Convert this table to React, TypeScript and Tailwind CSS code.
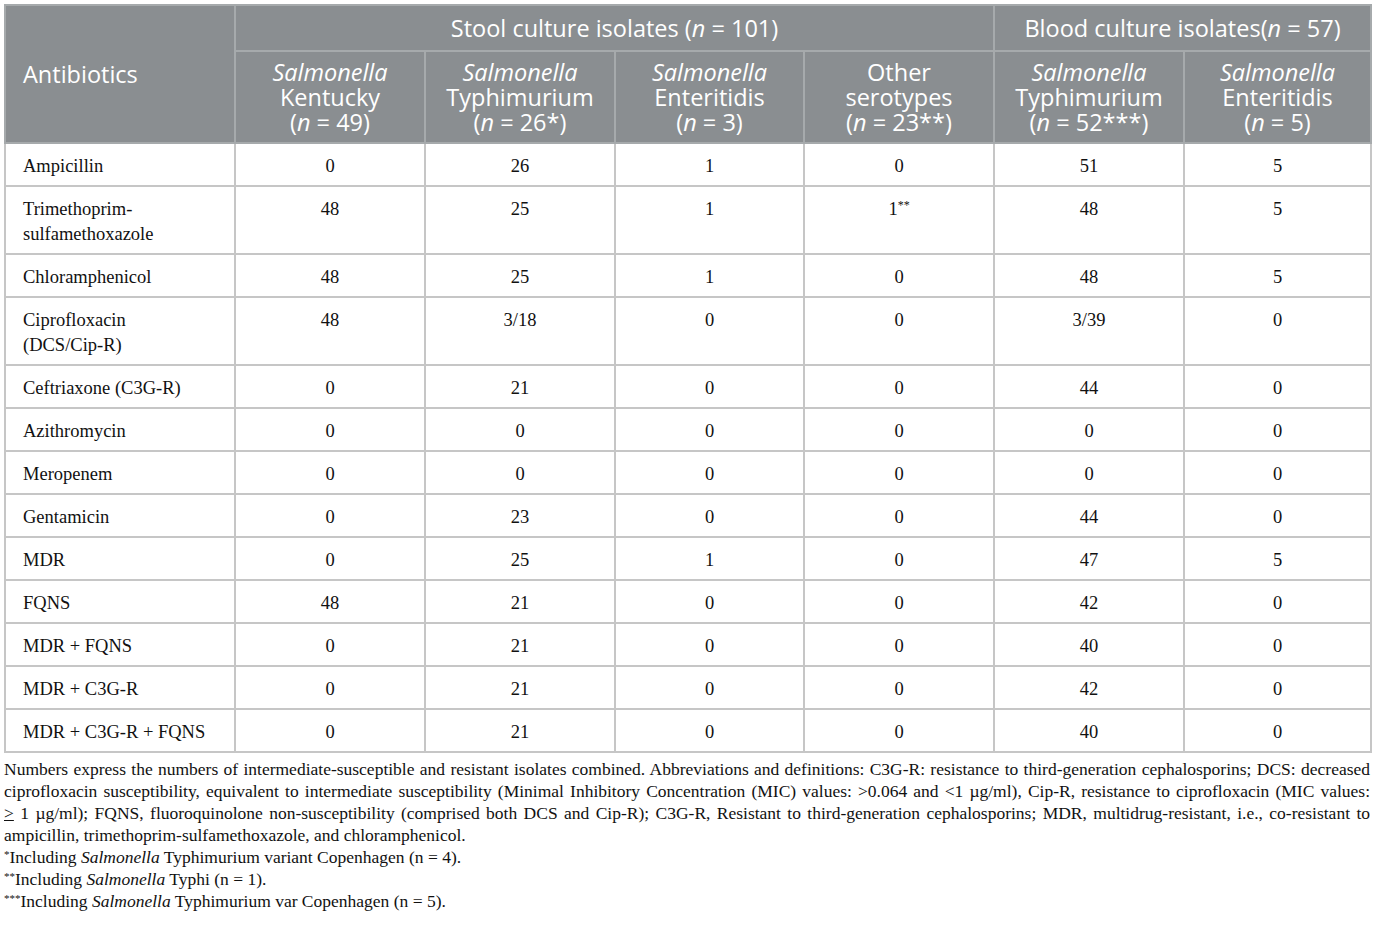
const sans = "font-['Open_Sans','Liberation_Sans',sans-serif]";
const serif = "font-['Liberation_Serif','DejaVu_Serif',serif]";

const rows: { name: string[]; values: string[] }[] = [
  { name: ["Ampicillin"], values: ["0", "26", "1", "0", "51", "5"] },
  { name: ["Trimethoprim-", "sulfamethoxazole"], values: ["48", "25", "1", "1**", "48", "5"] },
  { name: ["Chloramphenicol"], values: ["48", "25", "1", "0", "48", "5"] },
  { name: ["Ciprofloxacin", "(DCS/Cip-R)"], values: ["48", "3/18", "0", "0", "3/39", "0"] },
  { name: ["Ceftriaxone (C3G-R)"], values: ["0", "21", "0", "0", "44", "0"] },
  { name: ["Azithromycin"], values: ["0", "0", "0", "0", "0", "0"] },
  { name: ["Meropenem"], values: ["0", "0", "0", "0", "0", "0"] },
  { name: ["Gentamicin"], values: ["0", "23", "0", "0", "44", "0"] },
  { name: ["MDR"], values: ["0", "25", "1", "0", "47", "5"] },
  { name: ["FQNS"], values: ["48", "21", "0", "0", "42", "0"] },
  { name: ["MDR + FQNS"], values: ["0", "21", "0", "0", "40", "0"] },
  { name: ["MDR + C3G-R"], values: ["0", "21", "0", "0", "42", "0"] },
  { name: ["MDR + C3G-R + FQNS"], values: ["0", "21", "0", "0", "40", "0"] },
];

const serotypes = [
  { top: "Salmonella", topItalic: true, mid: "Kentucky", n: "49" },
  { top: "Salmonella", topItalic: true, mid: "Typhimurium", n: "26*" },
  { top: "Salmonella", topItalic: true, mid: "Enteritidis", n: "3" },
  { top: "Other", topItalic: false, mid: "serotypes", n: "23**" },
  { top: "Salmonella", topItalic: true, mid: "Typhimurium", n: "52***" },
  { top: "Salmonella", topItalic: true, mid: "Enteritidis", n: "5" },
];

function Value({ v }: { v: string }) {
  const m = v.match(/^(\d+)(\*+)$/);
  if (!m) return <>{v}</>;
  return (
    <>
      {m[1]}
      <sup className="text-[12px]">{m[2]}</sup>
    </>
  );
}

// justified line that keeps the reference's line breaks
const jl = "block whitespace-nowrap text-justify [text-align-last:justify]";

export default function App() {
  return (
    <div className="bg-white p-[4px] w-[1375px] h-[931px] overflow-hidden">
      <table className="table-fixed border-collapse w-[1366px] border-2 border-[#c6c6c6]">
        <colgroup>
          <col className="w-[230px]" />
          <col className="w-[190px]" />
          <col className="w-[190px]" />
          <col className="w-[189px]" />
          <col className="w-[190px]" />
          <col className="w-[190px]" />
          <col className="w-[187px]" />
        </colgroup>
        <thead className={`${sans} bg-[#8a8e91] text-white text-[23.5px] leading-[25px]`}>
          <tr className="h-[46px]">
            <th
              rowSpan={2}
              className="border-2 border-[#a6aaac] text-left font-normal pl-[17px] align-middle"
            >
              Antibiotics
            </th>
            <th colSpan={4} className="border-2 border-[#a6aaac] font-normal text-center">
              Stool culture isolates (<i>n</i> = 101)
            </th>
            <th colSpan={2} className="border-2 border-[#a6aaac] font-normal text-center">
              Blood culture isolates(<i>n</i> = 57)
            </th>
          </tr>
          <tr className="h-[92px]">
            {serotypes.map((s, i) => (
              <th key={i} className="border-2 border-[#a6aaac] font-normal text-center px-1">
                <div className={s.topItalic ? "italic" : ""}>{s.top}</div>
                <div>{s.mid}</div>
                <div>
                  (<i>n</i> = {s.n})
                </div>
              </th>
            ))}
          </tr>
        </thead>
        <tbody className={`${serif} text-[18.5px] leading-[25px] text-[#111]`}>
          {rows.map((r) => (
            <tr key={r.name.join("")}>
              <td className="border-2 border-[#c6c6c6] pl-[17px] pr-2 pt-[10px] pb-[6px] align-top">
                {r.name.map((line) => (
                  <div key={line}>{line}</div>
                ))}
              </td>
              {r.values.map((v, i) => (
                <td
                  key={i}
                  className="border-2 border-[#c6c6c6] text-center pt-[10px] pb-[6px] align-top"
                >
                  <Value v={v} />
                </td>
              ))}
            </tr>
          ))}
        </tbody>
      </table>

      <div className={`${serif} text-[17.5px] leading-[22px] text-[#111] mt-[5px] w-[1366px]`}>
        <p>
          <span className={jl}>
            Numbers express the numbers of intermediate-susceptible and resistant isolates combined.
            Abbreviations and definitions: C3G-R: resistance to third-generation cephalosporins; DCS:
            decreased
          </span>
          <span className={jl}>
            ciprofloxacin susceptibility, equivalent to intermediate susceptibility (Minimal
            Inhibitory Concentration (MIC) values: &gt;0.064 and &lt;1 µg/ml), Cip-R, resistance to
            ciprofloxacin (MIC values:
          </span>
          <span className={jl}>
            <span className="underline">&gt;</span> 1 µg/ml); FQNS, fluoroquinolone
            non-susceptibility (comprised both DCS and Cip-R); C3G-R, Resistant to third-generation
            cephalosporins; MDR, multidrug-resistant, i.e., co-resistant to
          </span>
          <span className="block">
            ampicillin, trimethoprim-sulfamethoxazole, and chloramphenicol.
          </span>
        </p>
        <p>
          <sup className="text-[11px]">*</sup>Including <i>Salmonella</i> Typhimurium variant
          Copenhagen (n = 4).
        </p>
        <p>
          <sup className="text-[11px]">**</sup>Including <i>Salmonella</i> Typhi (n = 1).
        </p>
        <p>
          <sup className="text-[11px]">***</sup>Including <i>Salmonella</i> Typhimurium var
          Copenhagen (n = 5).
        </p>
      </div>
    </div>
  );
}
